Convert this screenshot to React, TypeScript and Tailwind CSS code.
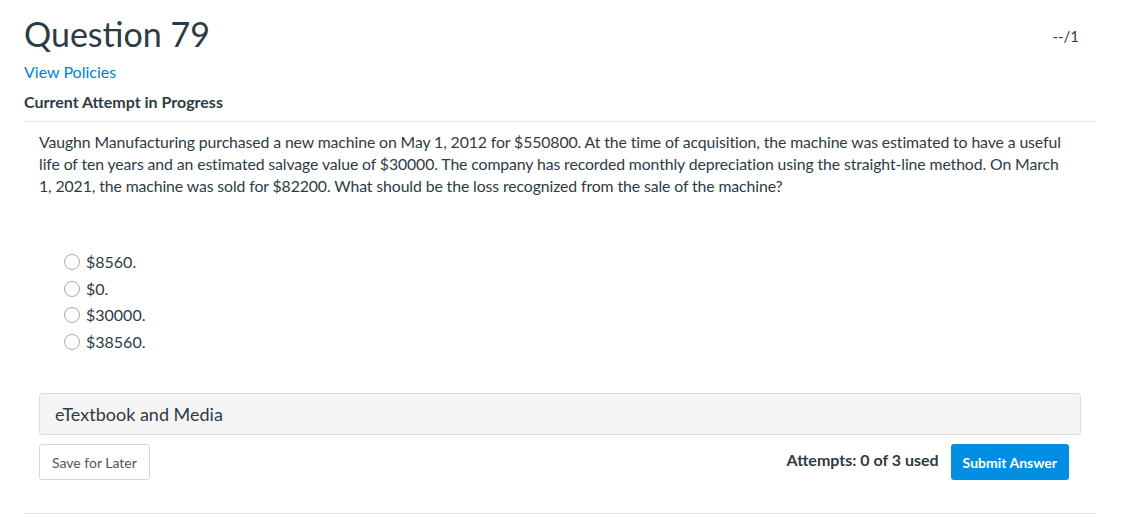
import { useState } from "react";

const OPTIONS = ["$8560.", "$0.", "$30000.", "$38560."];

export default function App() {
  const [picked, setPicked] = useState<number | null>(null);

  return (
    <div className="min-h-screen bg-white text-[#2d3b45] font-['Lato','Noto_Sans',sans-serif]">
      <div className="ml-[24px] mr-[27px] pt-[12px]">
        <div className="flex items-start justify-between">
          <h1 className="text-[34px] leading-[44px] font-normal">Question 79</h1>
          <span className="text-[15px] mt-[13px] mr-[17px]">--/1</span>
        </div>

        <a href="#" className="block mt-[6px] text-[16px] leading-[20px] text-[#0081d6]">
          View Policies
        </a>
        <div className="mt-[10px] text-[16px] leading-[20px] font-bold">Current Attempt in Progress</div>

        <div className="mt-[9px] border-t border-[#e8e8e8]" />

        <div className="px-[15px]">
          <p className="mt-[9px] text-[15.8px] leading-[22px] tracking-[-0.1px] pr-[10px]">
            Vaughn Manufacturing purchased a new machine on May 1, 2012 for $550800. At the time of acquisition,
            the machine was estimated to have a useful life of ten years and an estimated salvage value of $30000.
            The company has recorded monthly depreciation using the straight-line method. On March 1, 2021, the
            machine was sold for $82200. What should be the loss recognized from the sale of the machine?
          </p>

          <div className="mt-[52px] ml-[25px] flex flex-col">
            {OPTIONS.map((o, i) => (
              <label key={o} className="flex items-center h-[26.5px] cursor-pointer">
                <span
                  onClick={() => setPicked(i)}
                  className="w-[16px] h-[16px] rounded-full border border-[#a8a8a8] bg-white flex items-center justify-center"
                >
                  {picked === i && <span className="w-[8px] h-[8px] rounded-full bg-[#0081d6]" />}
                </span>
                <span className="ml-[6px] text-[16px]">{o}</span>
              </label>
            ))}
          </div>

          <div className="mt-[38px] h-[42px] rounded-[3px] border border-[#dcdcdc] bg-[#f5f5f5] flex items-center px-[15px] text-[18px]">
            eTextbook and Media
          </div>

          <div className="mt-[9px] flex items-center justify-between">
            <button className="h-[36px] px-[12px] rounded-[3px] border border-[#d6d6d6] bg-white text-[14px] text-[#555]">
              Save for Later
            </button>
            <div className="flex items-center mr-[12px]">
              <span className="text-[16px] font-bold mr-[12px] -mt-[4px]">Attempts: 0 of 3 used</span>
              <button className="h-[36px] px-[12px] rounded-[3px] bg-[#008ee2] text-white text-[14px] font-bold">
                Submit Answer
              </button>
            </div>
          </div>
        </div>

        <div className="mt-[33px] border-t border-[#e8e8e8]" />
      </div>
    </div>
  );
}
